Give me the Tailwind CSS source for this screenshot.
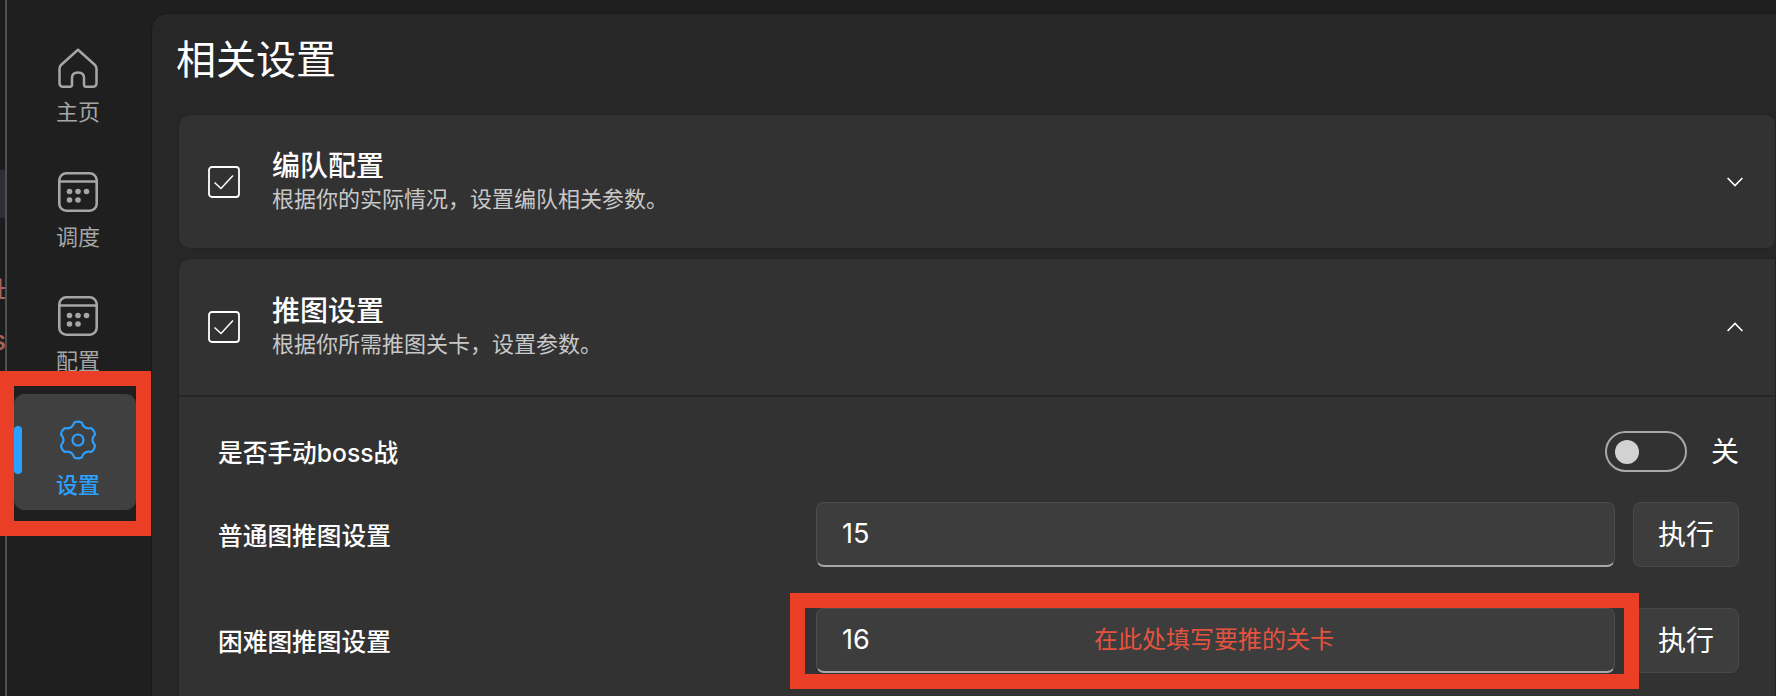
<!doctype html>
<html lang="zh">
<head>
<meta charset="utf-8">
<script src="https://cdn.jsdelivr.net/npm/@tailwindcss/browser@4"></script>
</head>
<body class="m-0 bg-[#1f1f1f]">
<div class="relative flex h-[696px] w-[1776px] overflow-hidden bg-[#1f1f1f] font-['Inter','Noto_Sans_CJK_SC',sans-serif] text-white">
  <!-- window behind -->
  <div class="relative w-[7px] shrink-0 overflow-hidden border-r-2 border-r-[#4f4f4f] bg-[#1a1c1f]">
    <div class="mt-[170px] h-[48px] bg-[#2c2f33]"></div>
    <div class="-ml-[15px] mt-[58px] w-[40px] text-[22px] font-medium leading-[26px] text-[#a8625a]">址</div>
    <div class="-ml-[8px] mt-[26px] w-[40px] text-[26px] font-medium leading-[26px] text-[#a8625a]">s</div>
  </div>

  <!-- sidebar -->
  <nav class="flex w-[144px] shrink-0 flex-col gap-2 pl-[7px] pr-[8px] pt-[22px]">
    <a class="flex h-[116px] w-[122px] flex-col items-center pl-[6px] pt-[26px] text-[#a6a6a6]">
      <svg class="h-[40px] w-[40px]" viewBox="0 0 40 40" fill="none" stroke="currentColor" stroke-width="2.5" stroke-linejoin="round" stroke-linecap="round"><path d="M20 1.8 L3 17 Q1.5 18.5 1.5 21 V35 Q1.5 38.8 5.5 38.8 H12 Q14 38.8 14 37 V30 Q14 24.5 20 24.5 Q26 24.5 26 30 V37 Q26 38.8 28 38.8 H34.5 Q38.5 38.8 38.5 35 V21 Q38.5 18.5 37 17 Z"/></svg>
      <span class="mt-[12px] text-[22px] leading-[24px]">主页</span>
    </a>
    <a class="flex h-[116px] w-[122px] flex-col items-center pl-[6px] pt-[26px] text-[#a6a6a6]">
      <svg class="h-[40px] w-[40px]" viewBox="0 0 40 40" fill="none" stroke="currentColor" stroke-width="2.6"><rect x="1.3" y="1.3" width="37.4" height="37.4" rx="7"/><path d="M1.3 9.5H38.7"/><g fill="currentColor" stroke="none"><circle cx="11.5" cy="19.5" r="2.8"/><circle cx="20" cy="19.5" r="2.8"/><circle cx="28.5" cy="19.5" r="2.8"/><circle cx="11.5" cy="28" r="2.8"/><circle cx="20" cy="28" r="2.8"/></g></svg>
      <span class="mt-[13px] text-[22px] leading-[24px]">调度</span>
    </a>
    <a class="flex h-[116px] w-[122px] flex-col items-center pl-[6px] pt-[26px] text-[#a6a6a6]">
      <svg class="h-[40px] w-[40px]" viewBox="0 0 40 40" fill="none" stroke="currentColor" stroke-width="2.6"><rect x="1.3" y="1.3" width="37.4" height="37.4" rx="7"/><path d="M1.3 9.5H38.7"/><g fill="currentColor" stroke="none"><circle cx="11.5" cy="19.5" r="2.8"/><circle cx="20" cy="19.5" r="2.8"/><circle cx="28.5" cy="19.5" r="2.8"/><circle cx="11.5" cy="28" r="2.8"/><circle cx="20" cy="28" r="2.8"/></g></svg>
      <span class="mt-[13px] text-[22px] leading-[24px]">配置</span>
    </a>
    <a class="relative flex h-[116px] w-[122px] flex-col items-center rounded-[10px] bg-[#404040] pl-[6px] pt-[26px] text-[#2ba0ff]">
      <span class="absolute left-0 top-[32px] h-[48px] w-[8px] rounded-full bg-[#2ba0ff]"></span>
      <svg class="h-[40px] w-[40px]" viewBox="-21 -21 42 42" fill="none" stroke="currentColor" stroke-width="2.3" stroke-linejoin="round"><circle cx="0" cy="0" r="5.8"/><path d="M-3.9 -18.4 Q0 -20 3.9 -18.4 Q6.25 -10.83 13.97 -12.58 Q17.32 -10 17.88 -5.81 Q12.5 0 17.88 5.81 Q17.32 10 13.97 12.58 Q6.25 10.83 3.9 18.4 Q0 20 -3.9 18.4 Q-6.25 10.83 -13.97 12.58 Q-17.32 10 -17.88 5.81 Q-12.5 0 -17.88 -5.81 Q-17.32 -10 -13.97 -12.58 Q-6.25 -10.83 -3.9 -18.4Z"/></svg>
      <span class="mt-[13px] text-[22px] font-medium leading-[24px]">设置</span>
    </a>
  </nav>

  <!-- main -->
  <main class="mt-[13px] min-w-0 flex-1 rounded-tl-[16px] border-l border-t border-[#1a1a1a] bg-[#272727] pl-[26px]">
    <h1 class="pt-[22px] text-[40px] font-normal leading-[48px] -ml-[2px]">相关设置</h1>

    <section class="mt-[30px] flex h-[135px] items-center rounded-l-[12px] rounded-r-[10px] border border-[#232323] bg-[#323232] pl-[29px] pr-[32px]">
      <svg class="h-[32px] w-[32px] shrink-0" viewBox="0 0 32 32" fill="none" stroke="#fff"><rect x="1" y="1" width="30" height="30" rx="3" stroke-width="1.8"/><path d="M6.5 16.5 L13 22.5 L25 9.5" stroke-width="1.5"/></svg>
      <div class="ml-[32px] flex-1">
        <div class="text-[28px] font-medium leading-[34px]">编队配置</div>
        <div class="mt-[1px] text-[22px] leading-[30px] text-[#c8c8c8]">根据你的实际情况，设置编队相关参数。</div>
      </div>
      <svg class="h-[10px] w-[16px]" viewBox="0 0 16 10" fill="none" stroke="#fff" stroke-width="1.6"><path d="M.6 1 L8 8.6 L15.4 1"/></svg>
    </section>

    <section class="mt-[9px] rounded-l-[12px] border border-[#232323] bg-[#323232] pb-[40px]">
      <div class="flex h-[138px] items-center border-b-2 border-b-[#262626] pl-[29px] pr-[32px]">
        <svg class="h-[32px] w-[32px] shrink-0" viewBox="0 0 32 32" fill="none" stroke="#fff"><rect x="1" y="1" width="30" height="30" rx="3" stroke-width="1.8"/><path d="M6.5 16.5 L13 22.5 L25 9.5" stroke-width="1.5"/></svg>
        <div class="ml-[32px] flex-1 pb-[2px]">
          <div class="text-[28px] font-medium leading-[34px]">推图设置</div>
          <div class="mt-[1px] text-[22px] leading-[30px] text-[#c8c8c8]">根据你所需推图关卡，设置参数。</div>
        </div>
        <svg class="h-[10px] w-[16px]" viewBox="0 0 16 10" fill="none" stroke="#fff" stroke-width="1.6"><path d="M.6 9 L8 1.4 L15.4 9"/></svg>
      </div>

      <div class="pl-[39px] pr-[36px]">
        <div class="flex h-[105px] items-center justify-between pt-[8px]">
          <span class="text-[24.7px] font-medium">是否手动boss战</span>
          <div class="-mt-[4px] flex items-center gap-[24px]">
            <div class="flex h-[41px] w-[82px] items-center rounded-full border-2 border-[#a8a8a8] pl-[8px]"><span class="h-[24px] w-[24px] rounded-full bg-[#d2d2d2]"></span></div>
            <span class="text-[28px]">关</span>
          </div>
        </div>
        <div class="flex h-[65px] items-center">
          <span class="w-[598px] pt-[4px] text-[24.7px] font-medium">普通图推图设置</span>
          <div class="flex h-[65px] w-[799px] items-center rounded-[8px] border border-b-2 border-[#4d4d4d] border-b-[#a8a8a8] bg-[#3d3d3d] pl-[25px] text-[27px]">15</div>
          <button class="ml-[18px] h-[65px] w-[106px] rounded-[8px] border border-[#484848] bg-[#3d3d3d] text-[28px]">执行</button>
        </div>
        <div class="mt-[41px] flex h-[65px] items-center">
          <span class="w-[598px] pt-[4px] text-[24.7px] font-medium">困难图推图设置</span>
          <div class="relative flex h-[65px] w-[799px] items-center rounded-[8px] border border-b-2 border-[#4d4d4d] border-b-[#a8a8a8] bg-[#3d3d3d] pl-[25px] text-[27px]">16
            <span class="absolute left-[277px] top-[14px] text-[24px] leading-[34px] text-[#e5533f]">在此处填写要推的关卡</span>
          </div>
          <button class="ml-[18px] h-[65px] w-[106px] rounded-[8px] border border-[#484848] bg-[#3d3d3d] text-[28px]">执行</button>
        </div>
      </div>
    </section>
  </main>

  <!-- annotations -->
  <div class="absolute left-0 top-[371px] h-[165px] w-[151px] border-y-[15px] border-l-[14px] border-r-[15px] border-[#ea3f26]"></div>
  <div class="absolute left-[790px] top-[593px] h-[96px] w-[849px] border-[15px] border-[#ea3f26]"></div>
</div>
</body>
</html>
